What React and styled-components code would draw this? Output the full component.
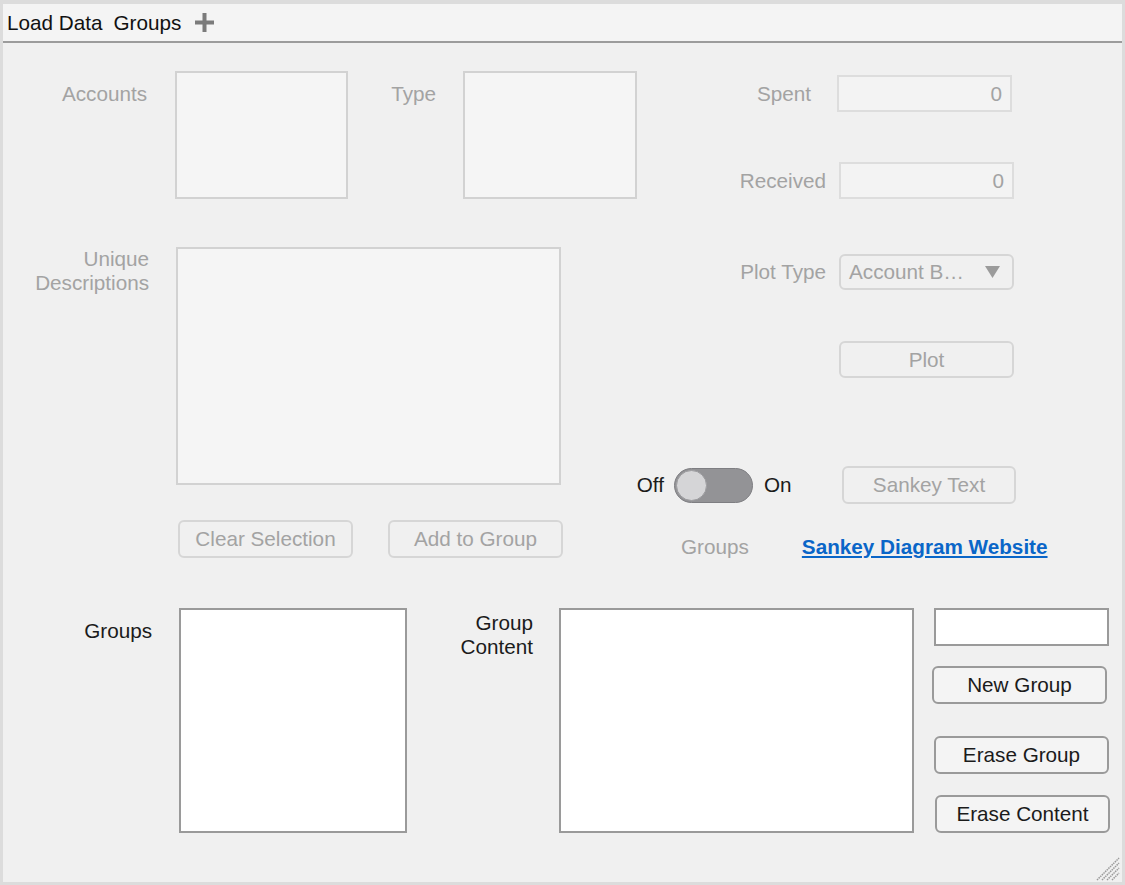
import React from "react";
import styled, { createGlobalStyle } from "styled-components";

const Global = createGlobalStyle`
  html, body { margin: 0; padding: 0; overflow: hidden; }
  body { font-family: "Liberation Sans", Arial, Helvetica, sans-serif; }
  * { box-sizing: border-box; }
`;

const DIM = "#a3a3a3";
const INK = "#1b1b1b";

const Window = styled.div`
  width: 1125px;
  height: 885px;
  background: #dcdcdc;
  padding: 4px 3px 3px 3px;
  display: flex;
  flex-direction: column;
  font-size: 20.7px;
`;

const TabBar = styled.div`
  height: 39px;
  flex: none;
  background: #f4f4f4;
  border-bottom: 2px solid #9c9c9c;
  display: flex;
  align-items: center;
  padding-left: 4px;
  gap: 11px;
  color: #111;
`;

const Tab = styled.div`
  line-height: 24px;
  white-space: nowrap;
`;

const AddTab = styled.div`
  display: flex;
  align-items: center;
  margin-left: 3px;
`;

const Content = styled.div`
  flex: 1;
  background: #f0f0f0;
  position: relative;
  display: flex;
  flex-direction: column;
`;

const TopSection = styled.div`
  height: 527px;
  display: flex;
`;

const Column = styled.div`
  width: ${(p) => (p.$w ? `${p.$w}px` : "auto")};
  flex: ${(p) => (p.$w ? "none" : 1)};
  display: flex;
  flex-direction: column;
  align-items: flex-start;
`;

const Row = styled.div`
  display: flex;
  align-items: ${(p) => p.$align || "flex-start"};
  margin-top: ${(p) => p.$mt || 0}px;
  margin-left: ${(p) => p.$ml || 0}px;
`;

const Label = styled.div`
  width: ${(p) => (p.$w ? `${p.$w}px` : "auto")};
  flex: none;
  margin-top: ${(p) => p.$mt || 0}px;
  margin-left: ${(p) => p.$ml || 0}px;
  text-align: ${(p) => p.$align || "right"};
  line-height: 24px;
  color: ${(p) => (p.$dim ? DIM : INK)};
  white-space: nowrap;
`;

const ListBox = styled.div`
  width: ${(p) => p.$w}px;
  height: ${(p) => p.$h}px;
  margin-left: ${(p) => p.$ml || 0}px;
  flex: none;
  background: ${(p) => (p.$dim ? "#f5f5f5" : "#ffffff")};
  border: 2px solid ${(p) => (p.$dim ? "#d2d2d2" : "#9a9a9a")};
`;

const NumField = styled.div`
  width: 175px;
  height: 37px;
  margin-left: ${(p) => p.$ml || 0}px;
  flex: none;
  background: #f3f3f3;
  border: 2px solid #dddddd;
  color: ${DIM};
  display: flex;
  align-items: center;
  justify-content: flex-end;
  padding-right: 8px;
`;

const TextInput = styled.div`
  width: 175px;
  height: 38px;
  margin-left: ${(p) => p.$ml || 0}px;
  background: #ffffff;
  border: 2px solid #9a9a9a;
`;

const Dropdown = styled.div`
  width: 175px;
  height: 36px;
  margin-left: ${(p) => p.$ml || 0}px;
  flex: none;
  border: 2px solid #d6d6d6;
  border-radius: 6px;
  background: #f0f0f0;
  color: ${DIM};
  display: flex;
  align-items: center;
  justify-content: space-between;
  padding: 0 12px 0 8px;
`;

const Button = styled.div`
  width: ${(p) => p.$w || 175}px;
  height: ${(p) => p.$h || 38}px;
  margin-left: ${(p) => p.$ml || 0}px;
  margin-top: ${(p) => p.$mt || 0}px;
  flex: none;
  border: 2px solid ${(p) => (p.$dim ? "#d6d6d6" : "#9a9a9a")};
  border-radius: 6px;
  background: ${(p) => (p.$dim ? "#f0f0f0" : "#f4f4f4")};
  color: ${(p) => (p.$dim ? DIM : INK)};
  display: flex;
  align-items: center;
  justify-content: center;
  white-space: nowrap;
`;

const Switch = styled.div`
  width: 79px;
  height: 35px;
  margin-left: ${(p) => p.$ml || 0}px;
  flex: none;
  border-radius: 18px;
  background: #939396;
  border: 1px solid #7e7e82;
  padding: 1px;
  display: flex;
  align-items: center;
`;

const Knob = styled.div`
  width: 31px;
  height: 31px;
  border-radius: 50%;
  background: #d5d5d7;
  border: 1px solid #9d9da0;
`;

const Link = styled.a`
  margin-left: ${(p) => p.$ml || 0}px;
  color: #0a66c8;
  font-weight: bold;
  text-decoration: underline;
  line-height: 24px;
  white-space: nowrap;
`;

const BottomSection = styled.div`
  display: flex;
  align-items: flex-start;
  padding-top: 38px;
`;

const Grip = styled.svg`
  position: absolute;
  right: 2px;
  bottom: 1px;
`;

export default function App() {
  return (
    <>
      <Global />
      <Window>
        <TabBar>
          <Tab>Load Data</Tab>
          <Tab>Groups</Tab>
          <AddTab>
            <svg width="19" height="19" viewBox="0 0 19 19">
              <rect x="7.5" y="0" width="4" height="19" fill="#7b7b7b" />
              <rect x="0" y="7.5" width="19" height="4" fill="#7b7b7b" />
            </svg>
          </AddTab>
        </TabBar>
        <Content>
          <TopSection>
            <Column $w={597}>
              <Row $mt={28}>
                <Label $w={144} $mt={11} $dim>Accounts</Label>
                <ListBox $dim $ml={28} $w={173} $h={128} />
                <Label $w={60} $ml={28} $mt={11} $dim>Type</Label>
                <ListBox $dim $ml={27} $w={174} $h={128} />
              </Row>
              <Row $mt={48}>
                <Label $w={146} $dim>
                  Unique
                  <br />
                  Descriptions
                </Label>
                <ListBox $dim $ml={27} $w={385} $h={238} />
              </Row>
              <Row $mt={35}>
                <Button $dim $ml={175}>Clear Selection</Button>
                <Button $dim $ml={35}>Add to Group</Button>
              </Row>
            </Column>
            <Column>
              <Row $mt={32}>
                <Label $w={211} $mt={7} $dim>Spent</Label>
                <NumField $ml={26}>0</NumField>
              </Row>
              <Row $mt={50}>
                <Label $w={226} $mt={7} $dim>Received</Label>
                <NumField $ml={13}>0</NumField>
              </Row>
              <Row $mt={55}>
                <Label $w={226} $mt={6} $dim>Plot Type</Label>
                <Dropdown $ml={13}>
                  <span>Account B…</span>
                  <svg width="15" height="12" viewBox="0 0 15 12">
                    <polygon points="0,0 15,0 7.5,12" fill="#9b9b9b" />
                  </svg>
                </Dropdown>
              </Row>
              <Row $mt={51}>
                <Button $dim $ml={239} $h={37}>Plot</Button>
              </Row>
              <Row $mt={88} $align="center">
                <Label $w={64} $align="right">Off</Label>
                <Switch $ml={10}>
                  <Knob />
                </Switch>
                <Label $w={38} $ml={11} $align="left">On</Label>
                <Button $dim $ml={40} $w={174}>Sankey Text</Button>
              </Row>
              <Row $mt={31}>
                <Label $ml={81} $align="left" $dim>Groups</Label>
                <Link $ml={53} href="#">Sankey Diagram Website</Link>
              </Row>
            </Column>
          </TopSection>
          <BottomSection>
            <Label $w={149} $mt={11}>Groups</Label>
            <ListBox $ml={27} $w={228} $h={225} />
            <Label $w={100} $ml={26} $mt={3}>
              Group
              <br />
              Content
            </Label>
            <ListBox $ml={26} $w={355} $h={225} />
            <Column $w={180}>
              <TextInput $ml={20} />
              <Button $ml={18} $mt={20}>New Group</Button>
              <Button $ml={20} $mt={32}>Erase Group</Button>
              <Button $ml={21} $mt={21}>Erase Content</Button>
            </Column>
          </BottomSection>
          <Grip width="24" height="24" viewBox="0 0 24 24">
            <g stroke="#9a9a9a" strokeWidth="1.5" strokeDasharray="1.5 0.8">
              <line x1="1" y1="23" x2="23" y2="1" />
              <line x1="6" y1="23" x2="23" y2="6" />
              <line x1="11" y1="23" x2="23" y2="11" />
              <line x1="16" y1="23" x2="23" y2="16" />
            </g>
          </Grip>
        </Content>
      </Window>
    </>
  );
}
